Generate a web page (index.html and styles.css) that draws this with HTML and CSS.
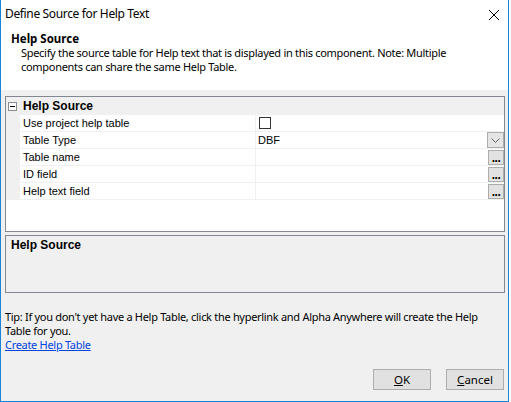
FILE: index.html
```html
<!DOCTYPE html>
<html>
<head>
<meta charset="utf-8">
<link rel="stylesheet" href="styles.css">
</head>
<body>
<div class="window">
  <div class="titlebar">
    <span class="title">Define Source for Help Text</span>
    <svg class="close" width="12" height="12" viewBox="0 0 12 12"><path d="M1 1 L11 11 M11 1 L1 11" stroke="#000" stroke-width="1" fill="none"/></svg>
  </div>
  <div class="header">
    <div class="h-title">Help Source</div>
    <div class="h-desc">Specify the source table for Help text that is displayed in this component. Note: Multiple<br>components can share the same Help Table.</div>
  </div>
  <div class="content">
    <div class="grid">
      <div class="g-head">
        <div class="gutter"><span class="minus"></span></div>
        <div class="g-head-label">Help Source</div>
      </div>
      <div class="g-row">
        <div class="gutter"></div>
        <div class="g-label">Use project help table</div>
        <div class="g-value"><span class="checkbox"></span></div>
      </div>
      <div class="g-row">
        <div class="gutter"></div>
        <div class="g-label">Table Type</div>
        <div class="g-value"><span class="val-text">DBF</span>
          <span class="dd-btn"><svg width="9" height="5" viewBox="0 0 9 5"><path d="M0.5 0.5 L4.5 4.5 L8.5 0.5" stroke="#606060" fill="none"/></svg></span>
        </div>
      </div>
      <div class="g-row">
        <div class="gutter"></div>
        <div class="g-label">Table name</div>
        <div class="g-value"><span class="el-btn">...</span></div>
      </div>
      <div class="g-row">
        <div class="gutter"></div>
        <div class="g-label">ID field</div>
        <div class="g-value"><span class="el-btn">...</span></div>
      </div>
      <div class="g-row">
        <div class="gutter"></div>
        <div class="g-label">Help text field</div>
        <div class="g-value"><span class="el-btn">...</span></div>
      </div>
    </div>
    <div class="helpbox">Help Source</div>
    <div class="tip">Tip: If you don't yet have a Help Table, click the hyperlink and Alpha Anywhere will create the Help<br>Table for you.</div>
    <a class="link" href="#">Create Help Table</a>
    <div class="buttons">
      <button class="btn"><u>O</u>K</button>
      <button class="btn"><u>C</u>ancel</button>
    </div>
  </div>
</div>
</body>
</html>
```

FILE: styles.css
```css
html, body {
  margin: 0;
  padding: 0;
  background: #ffffff;
}
body {
  font-family: "Noto Sans", "Open Sans", sans-serif;
  font-size: 11px;
  letter-spacing: -0.3px;
  color: #000;
}
.window {
  width: 509px;
  height: 402px;
  box-sizing: border-box;
  border-left: 1px solid #1883d7;
  border-right: 1px solid #1883d7;
  border-bottom: 1px solid #1883d7;
  background: #f0f0f0;
  display: flex;
  flex-direction: column;
}
.titlebar {
  height: 30px;
  flex: none;
  background: #fff;
  display: flex;
  align-items: flex-start;
  justify-content: space-between;
  padding-left: 4px;
  padding-right: 8px;
}
.title {
  font-size: 12px;
  letter-spacing: -0.35px;
  line-height: 16px;
  margin-top: 6px;
  white-space: nowrap;
}
.close {
  margin-top: 9px;
}
.header {
  height: 60px;
  flex: none;
  background: #fff;
  padding-left: 10px;
  padding-top: 1px;
  box-sizing: border-box;
}
.h-title {
  font-weight: bold;
  font-size: 11.5px;
  letter-spacing: 0;
  line-height: 15px;
}
.h-desc {
  padding-left: 10px;
  line-height: 14px;
  white-space: nowrap;
}
.content {
  padding: 6px 4px 0 4px;
  display: flex;
  flex-direction: column;
}
.grid {
  width: 500px;
  height: 136px;
  flex: none;
  box-sizing: border-box;
  border: 1px solid #828790;
  background: #fff;
  font-family: "Liberation Sans", Arial, sans-serif;
  font-size: 11px;
  letter-spacing: 0;
}
.g-head {
  height: 18px;
  background: #f0f0f0;
  display: flex;
}
.gutter {
  width: 14px;
  flex: none;
  background: #f0f0f0;
  position: relative;
}
.minus {
  position: absolute;
  left: 2px;
  top: 5px;
  width: 7px;
  height: 7px;
  border: 1px solid #8d8d8d;
  background: #fff;
}
.minus::after {
  content: "";
  position: absolute;
  left: 1px;
  top: 3px;
  width: 5px;
  height: 1px;
  background: #000;
}
.g-head-label {
  font-weight: bold;
  font-size: 12px;
  line-height: 18px;
  padding-left: 3px;
}
.g-row {
  height: 17px;
  display: flex;
}
.g-label {
  width: 236px;
  box-sizing: border-box;
  border-bottom: 1px solid #f0f0f0;
  border-right: 1px solid #f0f0f0;
  padding-left: 3px;
  line-height: 16px;
  flex: none;
}
.g-value {
  flex: 1;
  border-bottom: 1px solid #f0f0f0;
  display: flex;
  align-items: flex-start;
  justify-content: space-between;
  padding-left: 2px;
  line-height: 16px;
  position: relative;
}
.checkbox {
  display: block;
  width: 10px;
  height: 10px;
  border: 1px solid #333;
  margin-left: 1px;
  margin-top: 2px;
  background: #fff;
}
.val-text {
  color: #000;
}
.dd-btn {
  width: 15px;
  height: 14px;
  border: 1px solid #acacac;
  background: #e5e5e5;
  display: flex;
  align-items: center;
  justify-content: center;
}
.el-btn {
  position: absolute;
  right: 0;
  top: 1px;
  width: 14px;
  height: 13px;
  border: 1px solid #adadad;
  background: #e1e1e1;
  font-weight: bold;
  font-size: 12px;
  line-height: 15px;
  text-align: center;
  letter-spacing: -0.5px;
  color: #000;
}
.helpbox {
  margin-top: 3px;
  width: 500px;
  height: 58px;
  flex: none;
  box-sizing: border-box;
  border: 1px solid #828790;
  background: #f0f0f0;
  font-family: "Liberation Sans", Arial, sans-serif;
  font-weight: bold;
  font-size: 12px;
  letter-spacing: 0;
  line-height: 15px;
  padding: 2px 0 0 5px;
}
.tip {
  margin-top: 17px;
  line-height: 14px;
  white-space: nowrap;
}
.link {
  line-height: 14px;
  color: #0044dd;
  align-self: flex-start;
}
.buttons {
  margin-top: 17px;
  display: flex;
  justify-content: flex-end;
  gap: 15px;
}
.btn {
  width: 58px;
  height: 21px;
  border: 1px solid #adadad;
  background: #e1e1e1;
  font-family: "Noto Sans", "Open Sans", sans-serif;
  font-size: 11.5px;
  letter-spacing: 0;
  color: #000;
  padding: 0;
  margin: 0;
}
```
